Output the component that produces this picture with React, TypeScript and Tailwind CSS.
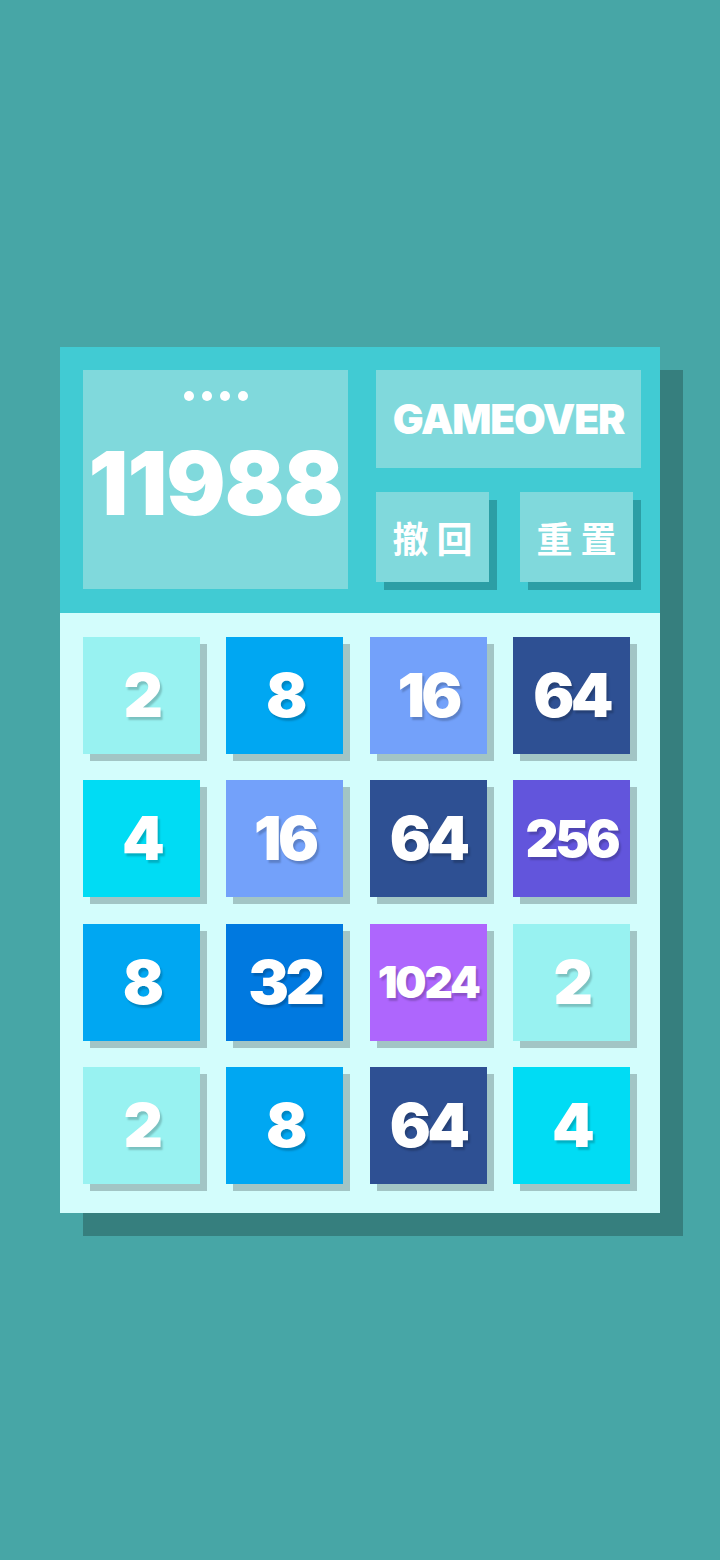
import React from "react";

const TILE_COLORS: Record<number, string> = {
  2: "bg-[#98f2f1]",
  4: "bg-[#00dcf4]",
  8: "bg-[#00a7f2]",
  16: "bg-[#73a1fa]",
  32: "bg-[#0079e0]",
  64: "bg-[#2e5093]",
  256: "bg-[#6255dc]",
  1024: "bg-[#ae66fd]",
};

const board: number[][] = [
  [2, 8, 16, 64],
  [4, 16, 64, 256],
  [8, 32, 1024, 2],
  [2, 8, 64, 4],
];

const digitFont = { fontFamily: "Inter, Lato, 'Noto Sans', sans-serif" };
const cjkFont = { fontFamily: "'Noto Sans CJK SC', 'Noto Sans', sans-serif" };

function sizeFor(value: number) {
  const len = String(value).length;
  if (len >= 4) return "text-[44px] tracking-[-0.05em]";
  if (len === 3) return "text-[51px] tracking-[-0.06em]";
  return "text-[61px] tracking-[-0.06em]";
}

function Tile({ value }: { value: number }) {
  return (
    <div
      className={`flex h-[117px] w-[117px] items-center justify-center shadow-[7px_7px_0_#a2c5c5] ${TILE_COLORS[value]}`}
    >
      <span
        className={`font-black leading-none text-white [text-shadow:2px_3px_2px_rgba(0,0,0,0.2)] ${sizeFor(value)}`}
        style={digitFont}
      >
        {value}
      </span>
    </div>
  );
}

function ActionButton({ label }: { label: string }) {
  return (
    <button className="flex h-[90px] w-[113px] items-center justify-center bg-[#80d9dc] shadow-[8px_8px_0_#2c9ea5]">
      <span
        className="pl-[8px] text-[36px] font-bold leading-none tracking-[8px] text-white"
        style={cjkFont}
      >
        {label}
      </span>
    </button>
  );
}

export default function App() {
  return (
    <div className="flex min-h-screen items-center justify-center bg-[#47a6a6]">
      <div className="w-[600px] shadow-[23px_23px_0_#367f7e]">
        {/* header: score and controls */}
        <div className="flex gap-[28px] bg-[#41cbd3] pb-[24px] pl-[23px] pr-[19px] pt-[23px]">
          <div className="flex h-[219px] w-[265px] flex-col items-center bg-[#80d9dc] pt-[21px]">
            <div className="flex gap-[8px]">
              <span className="h-[10px] w-[10px] rounded-full bg-white" />
              <span className="h-[10px] w-[10px] rounded-full bg-white" />
              <span className="h-[10px] w-[10px] rounded-full bg-white" />
              <span className="h-[10px] w-[10px] rounded-full bg-white" />
            </div>
            <div
              className="mt-[38px] text-[88px] font-black leading-none tracking-[-0.01em] text-white"
              style={digitFont}
            >
              11988
            </div>
          </div>
          <div className="flex w-[265px] flex-col gap-[24px]">
            <div className="flex h-[98px] items-center justify-center bg-[#80d9dc]">
              <span
                className="text-[41px] font-black leading-none tracking-[-0.03em] text-white"
                style={digitFont}
              >
                GAMEOVER
              </span>
            </div>
            <div className="flex gap-[31px]">
              <ActionButton label="撤回" />
              <ActionButton label="重置" />
            </div>
          </div>
        </div>
        {/* playing field */}
        <div className="bg-[#d3fdfc] pb-[29px] pl-[23px] pt-[24px]">
          <div className="grid grid-cols-[repeat(4,117px)] gap-[26.33px]">
            {board.flat().map((v, i) => (
              <Tile key={i} value={v} />
            ))}
          </div>
        </div>
      </div>
    </div>
  );
}
